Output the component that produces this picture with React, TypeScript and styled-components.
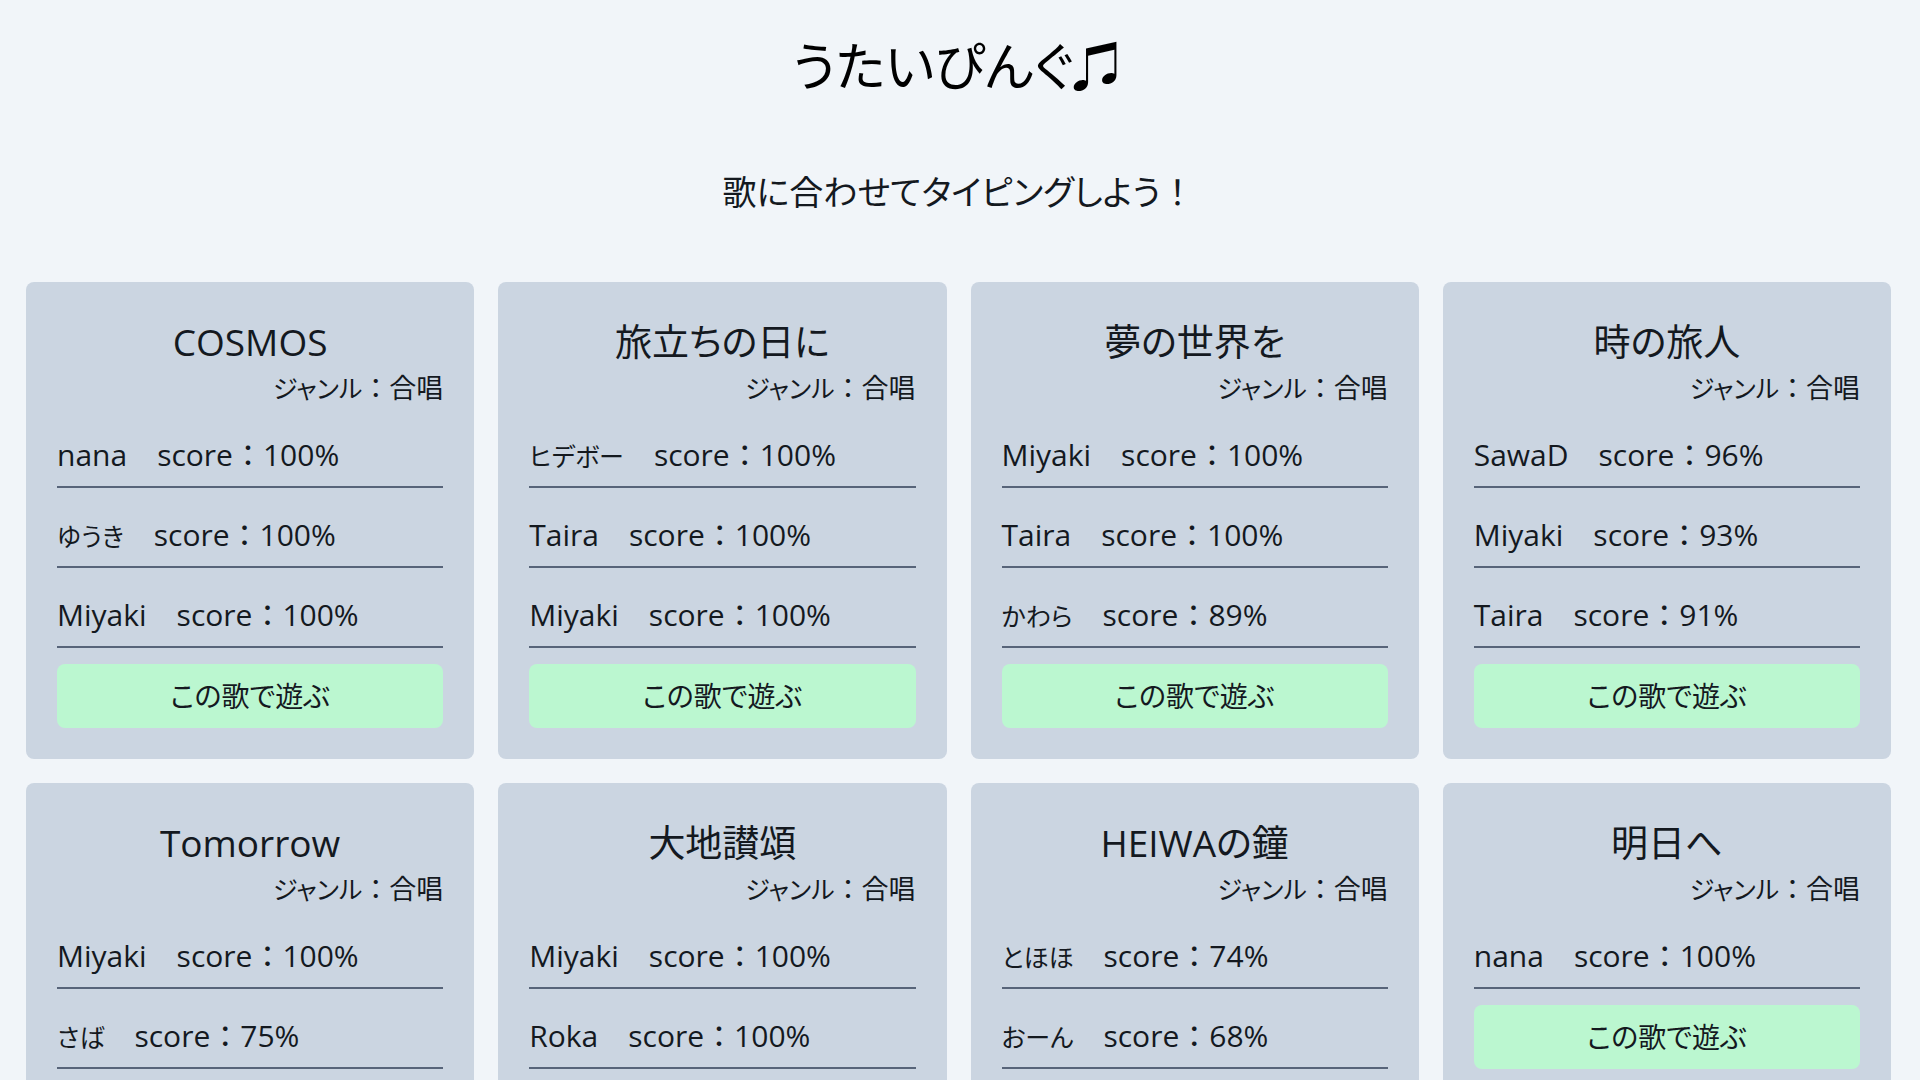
import React from "react";
import styled, { createGlobalStyle } from "styled-components";

const GlobalStyle = createGlobalStyle`
  *, *::before, *::after { box-sizing: border-box; }
  body {
    margin: 0;
    background: #f1f5f9;
    color: #14191f;
    font-family: "Open Sans", "Noto Sans CJK JP", sans-serif;
    font-size: 30px;
    font-weight: 400;
    line-height: 48px;
  }
  h1, h2, p, ul { margin: 0; padding: 0; font-weight: inherit; }
`;

const Page = styled.div`
  padding: 24px 29px 24px 26px;
`;

const Header = styled.header`
  text-align: center;
`;

const Kana = styled.span<{ $size?: number }>`
  font-size: ${({ $size }) => ($size ? `${$size}px` : "inherit")};
  font-feature-settings: "palt";
`;

const SiteTitle = styled.h1`
  font-size: 52px;
  line-height: 84px;
  color: #000;
`;

const Lead = styled.p`
  padding: 54px 0 60px;
  font-size: 34px;
  line-height: 60px;
`;

const SongGrid = styled.main`
  display: grid;
  grid-template-columns: repeat(4, minmax(0, 1fr));
  gap: 24px;
`;

const Card = styled.article`
  display: flex;
  flex-direction: column;
  padding: 31px;
  border-radius: 8px;
  background: #cbd5e1;
`;

const SongTitle = styled.h2`
  font-size: 37px;
  line-height: 58px;
  text-align: center;
  white-space: nowrap;
`;

const Genre = styled.p`
  height: 37px;
  font-size: 27px;
  line-height: 34px;
  text-align: right;
`;

const Ranking = styled.ul`
  list-style: none;
`;

const RankRow = styled.li`
  height: 80px;
  padding-top: 23px;
  border-bottom: 2px solid #576479;
  white-space: pre;
`;

const PlayButton = styled.button`
  height: 64px;
  margin-top: 16px;
  padding: 0;
  border: 0;
  border-radius: 8px;
  background: #bbf7d0;
  color: inherit;
  font: inherit;
  cursor: pointer;
`;

type Song = { title: string; ranking: [string, number][] };

const songs: Song[] = [
  { title: "COSMOS", ranking: [["nana", 100], ["ゆうき", 100], ["Miyaki", 100]] },
  { title: "旅立ちの日に", ranking: [["ヒデボー", 100], ["Taira", 100], ["Miyaki", 100]] },
  { title: "夢の世界を", ranking: [["Miyaki", 100], ["Taira", 100], ["かわら", 89]] },
  { title: "時の旅人", ranking: [["SawaD", 96], ["Miyaki", 93], ["Taira", 91]] },
  { title: "Tomorrow", ranking: [["Miyaki", 100], ["さば", 75]] },
  { title: "大地讃頌", ranking: [["Miyaki", 100], ["Roka", 100]] },
  { title: "HEIWAの鐘", ranking: [["とほほ", 74], ["おーん", 68]] },
  { title: "明日へ", ranking: [["nana", 100]] },
];

const isLatin = (text: string) => /^[A-Za-z]+$/.test(text);

function SongCard({ song }: { song: Song }) {
  return (
    <Card>
      <SongTitle>
        <Kana>{song.title}</Kana>
      </SongTitle>
      <Genre>
        <Kana $size={25}>ジャンル</Kana>：合唱
      </Genre>
      <Ranking>
        {song.ranking.map(([name, score]) => (
          <RankRow key={name}>
            {isLatin(name) ? name : <Kana $size={25}>{name}</Kana>}
            {`　score：${score}%`}
          </RankRow>
        ))}
      </Ranking>
      <PlayButton type="button">
        <Kana $size={28}>この歌で遊ぶ</Kana>
      </PlayButton>
    </Card>
  );
}

export default function App() {
  return (
    <>
      <GlobalStyle />
      <Page>
        <Header>
          <SiteTitle>
            <Kana>うたいぴんぐ♫</Kana>
          </SiteTitle>
          <Lead>
            <Kana>歌に合わせてタイピングしよう</Kana>！
          </Lead>
        </Header>
        <SongGrid>
          {songs.map((song) => (
            <SongCard key={song.title} song={song} />
          ))}
        </SongGrid>
      </Page>
    </>
  );
}
